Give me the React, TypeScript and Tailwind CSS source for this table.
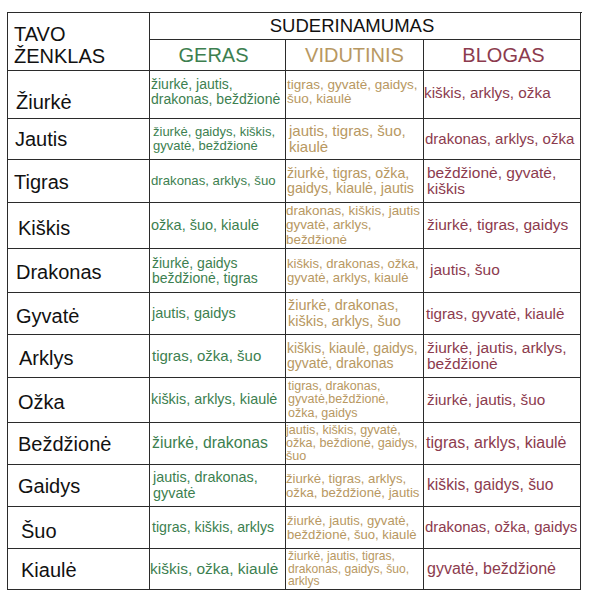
import clsx from "clsx";

type Cell = { t: string[]; c: string };
type Row = { name: string; np: string; good: Cell; mid: Cell; bad: Cell };

// compatibility table: sign name + good / medium / bad matches
const rows: Row[] = [
  {
    name: "Žiurkė",
    np: "pl-[8px] pt-[20px]",
    good: { t: ["žiurkė, jautis,", "drakonas, beždžionė"], c: "text-[14px] pl-[1px] pb-[6px]" },
    mid: { t: ["tigras, gyvatė, gaidys,", "šuo, kiaulė"], c: "text-[13.5px] pl-[1px] pb-[5px]" },
    bad: { t: ["kiškis, arklys, ožka"], c: "text-[15.3px] pl-[0px] pb-[3px]" },
  },
  {
    name: "Jautis",
    np: "pl-[7px] pt-[9px]",
    good: { t: ["žiurkė, gaidys, kiškis,", "gyvatė, beždžionė"], c: "text-[13px] pl-[3px]" },
    mid: { t: ["jautis, tigras, šuo,", "kiaulė"], c: "text-[15px] pl-[3px]" },
    bad: { t: ["drakonas, arklys, ožka"], c: "text-[15px] pl-[1px]" },
  },
  {
    name: "Tigras",
    np: "pl-[6px] pt-[11px]",
    good: { t: ["drakonas, arklys, šuo"], c: "text-[13.2px] pl-[1px]" },
    mid: { t: ["žiurkė, tigras, ožka,", "gaidys, kiaulė, jautis"], c: "text-[14.2px] pl-[1px]" },
    bad: { t: ["beždžionė, gyvatė,", "kiškis"], c: "text-[15.5px] pl-[3px]" },
  },
  {
    name: "Kiškis",
    np: "pl-[10px] pt-[14px]",
    good: { t: ["ožka, šuo, kiaulė"], c: "text-[14.5px] pl-[1px]" },
    mid: { t: ["drakonas, kiškis, jautis", "gyvatė, arklys,", "beždžionė"], c: "text-[13.4px] pl-[0px]" },
    bad: { t: ["žiurkė, tigras, gaidys"], c: "text-[15.5px] pl-[3px]" },
  },
  {
    name: "Drakonas",
    np: "pl-[8px] pt-[12px]",
    good: { t: ["žiurkė, gaidys", "beždžionė, tigras"], c: "text-[14px] pl-[2px]" },
    mid: { t: ["kiškis, drakonas, ožka,", "gyvatė, arklys, kiaulė"], c: "text-[13.1px] pl-[1px]" },
    bad: { t: ["jautis, šuo"], c: "text-[15.5px] pl-[6px]" },
  },
  {
    name: "Gyvatė",
    np: "pl-[8px] pt-[12px]",
    good: { t: ["jautis, gaidys"], c: "text-[14.5px] pl-[2px]" },
    mid: { t: ["žiurkė, drakonas,", "kiškis, arklys, šuo"], c: "text-[14.5px] pl-[2px]" },
    bad: { t: ["tigras, gyvatė, kiaulė"], c: "text-[15.2px] pl-[2px]" },
  },
  {
    name: "Arklys",
    np: "pl-[11px] pt-[12px]",
    good: { t: ["tigras, ožka, šuo"], c: "text-[15px] pl-[2px]" },
    mid: { t: ["kiškis, kiaulė, gaidys,", "gyvatė, drakonas"], c: "text-[14px] pl-[1px]" },
    bad: { t: ["žiurkė, jautis, arklys,", "beždžionė"], c: "text-[15.5px] pl-[3px]" },
  },
  {
    name: "Ožka",
    np: "pl-[10px] pt-[13px]",
    good: { t: ["kiškis, arklys, kiaulė"], c: "text-[14.4px] pl-[1px]" },
    mid: { t: ["tigras, drakonas,", "gyvatė,beždžionė,", "ožka, gaidys"], c: "text-[12.5px] pl-[2px]" },
    bad: { t: ["žiurkė, jautis, šuo"], c: "text-[15.3px] pl-[3px]" },
  },
  {
    name: "Beždžionė",
    np: "pl-[10px] pt-[10px]",
    good: { t: ["žiurkė, drakonas"], c: "text-[15.8px] pl-[2px]" },
    mid: { t: ["jautis, kiškis, gyvatė,", "ožka, beždionė, gaidys,", "šuo"], c: "text-[12.6px] pl-[0px]" },
    bad: { t: ["tigras, arklys, kiaulė"], c: "text-[16px] pl-[2px]" },
  },
  {
    name: "Gaidys",
    np: "pl-[10px] pt-[10px]",
    good: { t: ["jautis, drakonas,", "gyvatė"], c: "text-[14.4px] pl-[3px]" },
    mid: { t: ["žiurkė, tigras, arklys,", "ožka, beždžionė, jautis"], c: "text-[13.2px] pl-[0px]" },
    bad: { t: ["kiškis, gaidys, šuo"], c: "text-[15.7px] pl-[3px]" },
  },
  {
    name: "Šuo",
    np: "pl-[13px] pt-[13px]",
    good: { t: ["tigras, kiškis, arklys"], c: "text-[14.2px] pl-[2px]" },
    mid: { t: ["žiurkė, jautis, gyvatė,", "beždžionė, šuo, kiaulė"], c: "text-[13.1px] pl-[1px]" },
    bad: { t: ["drakonas, ožka, gaidys"], c: "text-[14.9px] pl-[1px]" },
  },
  {
    name: "Kiaulė",
    np: "pl-[13px] pt-[10px]",
    good: { t: ["kiškis, ožka, kiaulė"], c: "text-[15.5px] pl-[0px]" },
    mid: { t: ["žiurkė, jautis, tigras,", "drakonas, gaidys, šuo,", "arklys"], c: "text-[12.1px] pl-[2px]" },
    bad: { t: ["gyvatė, beždžionė"], c: "text-[16px] pl-[3px]" },
  },
];

const line = "border-r-[1.5px] border-b-[1.5px] border-[#2b2b2b]";

function DataCell({ cell, color }: { cell: Cell; color: string }) {
  return (
    <div className={clsx("flex items-center overflow-visible whitespace-nowrap leading-[1.05]", line, color, cell.c)}>
      <div>
        {cell.t.map((l) => (
          <div key={l}>{l}</div>
        ))}
      </div>
    </div>
  );
}

export default function App() {
  return (
    <div className="h-[600px] w-[591px] bg-white pl-[7px] pt-[12px] font-['Liberation_Sans',Arial,sans-serif] text-[#111]">
      <div className="grid w-[575px] grid-cols-[142px_136px_138px_157px] grid-rows-[27px_31px_48px_41px_43px_46px_44px_42px_43px_45px_42px_42px_42px_41px] border-l-[1.5px] border-t-[1.5px] border-[#2b2b2b]">
        <div className={clsx("row-span-2 pl-[6px] pt-[10px] text-[20px] leading-[22px]", line)}>
          TAVO
          <br />
          ŽENKLAS
        </div>
        <div className={clsx("col-span-3 flex items-center justify-center pr-[26px] text-[18.5px]", line)}>
          SUDERINAMUMAS
        </div>
        <div className={clsx("flex items-center justify-center pr-[8px] text-[20px] text-[#3d7f50]", line)}>GERAS</div>
        <div className={clsx("flex items-center justify-center text-[20px] text-[#b89862]", line)}>VIDUTINIS</div>
        <div className={clsx("flex items-center justify-center pl-[3px] text-[20px] text-[#8c3b4e]", line)}>BLOGAS</div>

        {rows.map((r) => (
          <div key={r.name} className="contents">
            <div className={clsx("text-[20px] leading-[23px]", line, r.np)}>{r.name}</div>
            <DataCell cell={r.good} color="text-[#3d7f50]" />
            <DataCell cell={r.mid} color="text-[#b89862]" />
            <DataCell cell={r.bad} color="text-[#8c3b4e]" />
          </div>
        ))}
      </div>
    </div>
  );
}
